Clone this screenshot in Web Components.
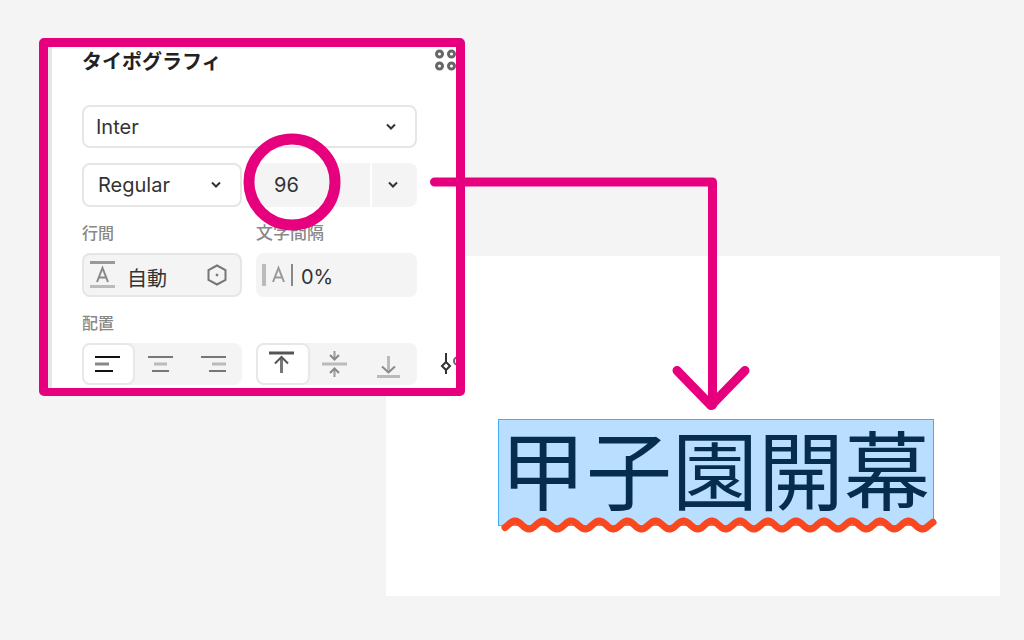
<!DOCTYPE html>
<html lang="ja">
<head>
<meta charset="utf-8">
<title>タイポグラフィ</title>
<style>
  body { margin: 0; background: #f4f4f4; font-family: Inter, "Noto Sans CJK JP", sans-serif; color: #333; }
</style>
</head>
<body>
<tutorial-stage>
  <art-board><selected-text>甲子園開幕</selected-text></art-board>
  <typography-panel></typography-panel>
  <callout-marks></callout-marks>
</tutorial-stage>
<script>
const define = (name, html) => customElements.define(name, class extends HTMLElement {
  constructor() {
    super();
    this.attachShadow({ mode: 'open' }).innerHTML = html(this);
  }
});

define('tutorial-stage', () => `
<style>
  :host { display: grid; position: relative; box-sizing: border-box; min-height: 100vh; padding: 38px 24px 44px 39px; align-items: start; overflow: hidden; }
  ::slotted(art-board) { grid-area: 1 / 1; margin: 218px 0 0 347px; }
  ::slotted(typography-panel) { grid-area: 1 / 1; z-index: 1; }
  ::slotted(callout-marks) { position: absolute; top: 0; left: 0; z-index: 2; }
</style><slot></slot>`);

define('art-board', () => `
<style>
  :host { display: flex; background: #fff; padding: 163px 66px 70px 112px; }
</style><slot></slot>`);

const wave = () => {
  const points = [];
  for (let x = 7; x <= 435; x++) points.push(x + ' ' + (9 - 4 * Math.cos((x - 17) / 28.1 * 2 * Math.PI)).toFixed(1));
  return 'M' + points.join('L');
};
define('selected-text', () => `
<style>
  :host { display: block; position: relative; box-sizing: border-box; width: 436px; border: 1px solid #42adf5; background: #b9deff; color: #062c4e; font: 400 86px/93px "Noto Sans CJK JP", sans-serif; padding: 0 0 12px 1px; white-space: nowrap; }
  svg { position: absolute; left: -1px; top: 96px; overflow: visible; }
</style><slot></slot>
<svg width="440" height="18" fill="none" stroke="#f9481f" stroke-width="7" stroke-linecap="round" stroke-linejoin="round" aria-hidden="true"><path d="${wave()}"/></svg>`);

define('select-field', el => `
<style>
  :host { display: grid; align-items: center; }
  select, svg { grid-area: 1 / 1; }
  select { appearance: none; box-sizing: border-box; width: 100%; height: 100%; margin: 0; padding: 0 40px 0 var(--inset, 12px); border: 2px solid #e6e6e6; border-radius: 8px; background: #fff; color: #333; font: inherit; }
  svg { justify-self: end; margin-right: 20px; pointer-events: none; }
</style>
<select aria-label="${el.getAttribute('label')}"><option>${el.getAttribute('value')}</option></select>
<svg width="12" height="8" fill="none" stroke="#333" stroke-width="2"><path d="M2 1.5 6 5.5 10 1.5"/></svg>`);

define('size-field', () => `
<style>
  :host { display: flex; gap: 2px; }
  input, button { box-sizing: border-box; border: 0; background: #f4f4f4; color: #333; font: inherit; margin: 0; }
  input { flex: 1; min-width: 0; padding: 0 0 0 18px; border-radius: 8px 0 0 8px; }
  button { width: 45px; padding: 0 3px 0 0; border-radius: 0 8px 8px 0; display: grid; place-items: center; }
</style>
<input aria-label="サイズ" value="96">
<button aria-label="サイズを選択"><svg width="12" height="8" fill="none" stroke="#333" stroke-width="2"><path d="M2 1.5 6 5.5 10 1.5"/></svg></button>`);

define('icon-field', el => `
<style>
  :host { display: flex; align-items: center; box-sizing: border-box; border: 2px solid var(--edge, #f4f4f4); border-radius: 8px; background: #f4f4f4; gap: var(--gap, 7px); padding: 0 12px 0 4px; }
  input { flex: 1; min-width: 0; height: 30px; border: 0; padding: 4px 0 0; margin: 0; box-sizing: content-box; background: none; color: #333; font: inherit; }
</style>
<slot name="before"></slot><input aria-label="${el.getAttribute('label')}" value="${el.getAttribute('value')}"><slot name="after"></slot>`);

const alignIcons = {
  left: '<path d="M0 2H25M0 16H18" stroke="#111"/><path d="M0 9H14" stroke="#888" stroke-width="3"/>',
  center: '<path d="M0 2H25M4 16H21" stroke="#777"/><path d="M6 9H19" stroke="#bbb" stroke-width="3"/>',
  right: '<path d="M0 2H25M8 16H25" stroke="#777"/><path d="M11 9H25" stroke="#bbb" stroke-width="3"/>',
  top: '<path d="M0-2H25" stroke="#555" stroke-width="3"/><path d="M12.500 18V3" stroke="#777" stroke-width="3"/><path d="M6 8.500 12.500 2 19 8.500" stroke="#555"/>',
  middle: '<path d="M0 9H25" stroke="#bbb" stroke-width="3"/><path d="M12.500-4V4M12.500 22V14" stroke="#999"/><path d="M8 0 12.500 4.500 17 0M8 18 12.500 13.500 17 18" stroke="#888"/>',
  bottom: '<path d="M1 21.500H24" stroke="#bbb" stroke-width="3"/><path d="M12.500 1V17" stroke="#bbb" stroke-width="3"/><path d="M6 11.500 12.500 17.500 19 11.500" stroke="#888"/>'
};
define('align-group', el => {
  const items = el.getAttribute('items').split(' ');
  return `
<style>
  :host { display: block; }
  fieldset { display: grid; grid-template-columns: 1fr 1fr 1fr; height: 100%; margin: 0; padding: 0; border: 0; border-radius: 8px; background: #f4f4f4; }
  label { display: grid; align-items: center; justify-items: center; border: 2px solid transparent; border-radius: 8px; }
  label:has(:checked) { background: #fff; border-color: #e8e8e8; }
  input { grid-area: 1 / 1; appearance: none; margin: 0; width: 100%; height: 100%; }
  svg { grid-area: 1 / 1; margin-right: 3px; overflow: visible; pointer-events: none; }
</style>
<fieldset aria-label="${el.getAttribute('label')}">${items.map((name, i) => `
  <label><input type="radio" name="align" aria-label="${name}"${i ? '' : ' checked'}><svg width="25" height="18" fill="none" stroke-width="2">${alignIcons[name]}</svg></label>`).join('')}
</fieldset>`;
});

define('typography-panel', () => `
<style>
  :host { display: block; box-sizing: border-box; width: 426px; border: solid #e6007e; border-width: 9px 9px 8px; border-radius: 5px; background: #fff; overflow: hidden; font-size: 20px; }
  .body { border-left: 4px solid #e6e6e6; padding-left: 30px; display: grid; grid-template-columns: 160px 161px 24px; column-gap: 14px; grid-template-rows: 30px 28px 43px 15px 44px 46px 44px 46px 42px; padding-bottom: 3px; overflow: hidden; }
  h2 { grid-area: 1 / 1 / 2 / 3; margin: 0; font-size: 20px; line-height: 30px; font-weight: 600; color: #222; white-space: nowrap; }
  .family { grid-area: 3 / 1 / 4 / 3; }
  .style { grid-area: 5 / 1; --inset: 14px; }
  size-field { grid-area: 5 / 2; }
  .label { align-self: end; margin-bottom: 10px; font-size: 16px; line-height: 20px; color: #888; font-weight: 500; }
  .line { grid-area: 6 / 1; } .letter { grid-area: 6 / 2; font-size: 17px; } .place { grid-area: 8 / 1; }
  .leading { grid-area: 7 / 1; --edge: #e6e6e6; --gap: 11px; }
  .tracking { grid-area: 7 / 2; }
  .horizontal { grid-area: 9 / 1; }
  .vertical { grid-area: 9 / 2; }
  button { border: 0; padding: 0; margin: 0; background: none; width: 24px; height: 24px; }
  .styles { grid-area: 1 / 3; margin-left: 4px; }
  .more { grid-area: 9 / 3; margin: 9px 0 0 9px; }
  svg { display: block; overflow: visible; }
</style>
<div class="body">
  <h2>タイポグラフィ</h2>
  <button class="styles" aria-label="スタイル"><svg width="24" height="24" fill="none" stroke="#666" stroke-width="3"><circle cx="4.500" cy="7" r="3"/><circle cx="16.500" cy="7" r="3"/><circle cx="4.500" cy="19" r="3"/><circle cx="16.500" cy="19" r="3"/></svg></button>
  <select-field class="family" label="フォント" value="Inter"></select-field>
  <select-field class="style" label="ウェイト" value="Regular"></select-field>
  <size-field></size-field>
  <div class="label line">行間</div>
  <div class="label letter">文字間隔</div>
  <icon-field class="leading" label="行間" value="自動">
    <svg slot="before" width="28" height="28" fill="none"><path d="M2 1.500H27" stroke="#999" stroke-width="3"/><path d="M2 25.500H27" stroke="#bbb" stroke-width="3"/><path d="M9 21 14.500 7 20 21M11 16.500H18" stroke="#888" stroke-width="2"/></svg>
    <svg slot="after" width="22" height="22" fill="none" stroke="#777" stroke-width="2"><path d="M11 1.500 19.500 6V16L11 20.500 2.500 16V6Z"/><circle cx="11" cy="11" r="1" fill="#666" stroke-width="1"/></svg>
  </icon-field>
  <icon-field class="tracking" label="文字間隔" value="0%">
    <svg slot="before" width="32" height="22" fill="none"><path d="M2 0V22" stroke="#bbb" stroke-width="4"/><path d="M30 0V22" stroke="#888" stroke-width="2"/><path d="M11 18 16.500 4 22 18M13 13.500H20" stroke="#999" stroke-width="2"/></svg>
  </icon-field>
  <div class="label place">配置</div>
  <align-group class="horizontal" label="横の配置" items="left center right"></align-group>
  <align-group class="vertical" label="縦の配置" items="top middle bottom"></align-group>
  <button class="more" aria-label="詳細設定"><svg width="24" height="24" fill="none" stroke="#333" stroke-width="2"><path d="M6 1V10M6 18V22"/><path d="M6 10 10 14 6 18 2 14Z"/><circle cx="18" cy="9" r="4" stroke="#666"/></svg></button>
</div>`);

define('callout-marks', () => `
<style>
  :host { display: block; pointer-events: none; }
  svg { display: block; }
</style>
<svg width="760" height="420" fill="none" stroke="#e6007e" stroke-width="9" stroke-linecap="round" stroke-linejoin="round" aria-hidden="true">
  <circle cx="292" cy="182" r="43" stroke-width="11"/>
  <path d="M434.500 182H712.500V405"/>
  <path d="M677 370.500 711 405.500 745 370.500"/>
</svg>`);
</script>
</body>
</html>
